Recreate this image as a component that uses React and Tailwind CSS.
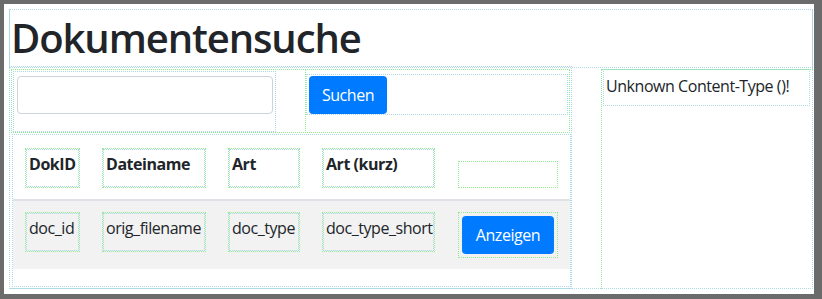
import React from "react";

const font = { fontFamily: '"Open Sans", "Noto Sans", sans-serif' };

function HeadCell({ w, children }) {
  return (
    <div className={`${w} outline outline-dotted outline-[#90ee90] p-[1px]`}>
      <div className="outline outline-dotted outline-[#add8e6] px-[2px] pt-[2px] pb-[10px] leading-[24px] font-bold whitespace-nowrap">
        {children}
      </div>
    </div>
  );
}

function DataCell({ w, children }) {
  return (
    <div className={`${w} outline outline-dotted outline-[#90ee90] p-[1px]`}>
      <div className="outline outline-dotted outline-[#add8e6] px-[2px] pt-[2px] pb-[10px] leading-[24px] whitespace-nowrap">
        {children}
      </div>
    </div>
  );
}

export default function App() {
  return (
    <div className="w-[822px] h-[299px] bg-[#6b6b6b] pt-[4px] pl-[4px] overflow-hidden" style={font}>
      <div className="w-[810px] h-[290px] bg-white pt-[6px] pl-[6px] text-[#212529] text-[16px] tracking-[-0.45px]">
        <div className="w-[802px] h-[278px] outline outline-dotted outline-[#add8e6] flex flex-col">
          {/* Title */}
          <div className="h-[57px] outline outline-dotted outline-[#add8e6] pl-[1px] pt-[4px]">
            <h1 className="text-[40px] font-semibold leading-[48px] tracking-[-1.1px]">Dokumentensuche</h1>
          </div>
          {/* Row */}
          <div className="flex h-[221px]">
            {/* Left column */}
            <div className="w-[561px] outline outline-dotted outline-[#add8e6] flex flex-col">
              {/* Search form */}
              <div className="ml-[2px] mt-[3px] w-[557px] h-[62px] outline outline-dotted outline-[#90ee90] flex">
                <div className="ml-[2px] mt-[2px] w-[261px] h-[59px] outline outline-dotted outline-[#add8e6] pt-[4px] pl-[3px]">
                  <input
                    type="text"
                    className="w-[256px] h-[38px] border border-[#ced4da] rounded-[4px] bg-white"
                  />
                </div>
                <div className="ml-[31px] w-[263px] h-[62px] outline outline-dotted outline-[#90ee90]">
                  <div className="ml-[1px] mt-[5px] w-[260px] h-[39px] outline outline-dotted outline-[#add8e6] pl-[2px] pt-[1px]">
                    <button className="h-[38px] w-[78px] bg-[#007bff] text-white rounded-[4px] leading-[24px]">
                      Suchen
                    </button>
                  </div>
                </div>
              </div>
              {/* Table */}
              <div className="ml-[3px] mt-[3px] w-[557px] h-[151px] outline outline-dotted outline-[#add8e6]">
                <div className="h-[64px] flex items-end pb-[12px] pl-[13px] gap-[24px]">
                  <HeadCell w="w-[53px]">DokID</HeadCell>
                  <HeadCell w="w-[102px]">Dateiname</HeadCell>
                  <HeadCell w="w-[70px]">Art</HeadCell>
                  <HeadCell w="w-[111px]">Art (kurz)</HeadCell>
                  <div className="ml-[1px] w-[98px] h-[25px] outline outline-dotted outline-[#90ee90]"></div>
                </div>
                <div className="h-[2px] bg-[#dee2e6]"></div>
                <div className="h-[68px] bg-[#f2f2f2] flex items-start pt-[12px] pl-[13px] gap-[24px]">
                  <DataCell w="w-[53px]">doc_id</DataCell>
                  <DataCell w="w-[102px]">orig_filename</DataCell>
                  <DataCell w="w-[70px]">doc_type</DataCell>
                  <DataCell w="w-[111px]">doc_type_short</DataCell>
                  <div className="ml-[1px] w-[98px] h-[44px] outline outline-dotted outline-[#90ee90] p-[3px]">
                    <button className="w-[92px] h-[38px] bg-[#007bff] text-white rounded-[4px] leading-[24px]">
                      Anzeigen
                    </button>
                  </div>
                </div>
              </div>
            </div>
            {/* Right column */}
            <div className="ml-[31px] mt-[3px] w-[210px] outline outline-dotted outline-[#90ee90]">
              <div className="ml-[2px] w-[205px] h-[35px] outline outline-dotted outline-[#add8e6] pt-[4px] pl-[2px] leading-[24px] whitespace-nowrap">
                Unknown Content-Type ()!
              </div>
            </div>
          </div>
        </div>
      </div>
    </div>
  );
}
